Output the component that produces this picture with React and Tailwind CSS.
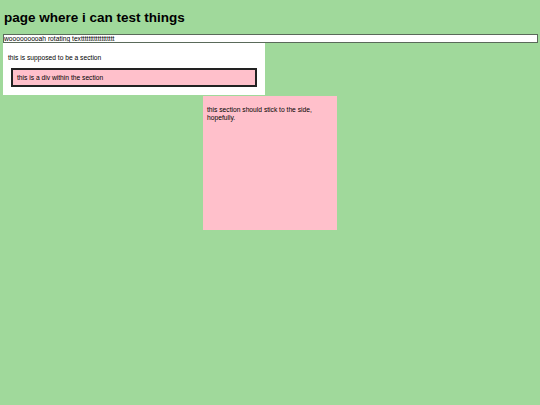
import React from "react";

const App = () => {
  return (
    <div className="min-h-[405px] w-full bg-[#a0d99b] font-['Liberation_Sans',Arial,sans-serif] text-black">
      <h1 className="pt-[10px] pl-[4px] text-[13.5px] font-bold leading-[16px]">
        page where i can test things
      </h1>

      {/* rotating text bar */}
      <div className="ml-[3px] mr-[2px] mt-[8px] h-[9px] border border-[#5a6a5a] bg-white text-[6.7px] leading-[7px] overflow-hidden whitespace-nowrap">
        wooooooooah rotating textttttttttttttttttt
      </div>

      {/* section */}
      <section className="ml-[3px] w-[262px] bg-white px-[5px] pt-[11px] pb-[8px] text-[6.7px]">
        <p className="leading-[8px]">this is supposed to be a section</p>
        <div className="mx-[3px] mt-[6px] h-[19px] border-2 border-[#222] bg-[#ffc0cb] pl-[4px] flex items-center leading-[8px]">
          this is a div within the section
        </div>
      </section>

      {/* sticky side section */}
      <section className="ml-[203px] mt-px h-[134px] w-[134px] bg-[#ffc0cb] px-[4px] pt-[10px] text-[6.7px] leading-[8px]">
        this section should stick to the side, hopefully.
      </section>
    </div>
  );
};

export default App;
